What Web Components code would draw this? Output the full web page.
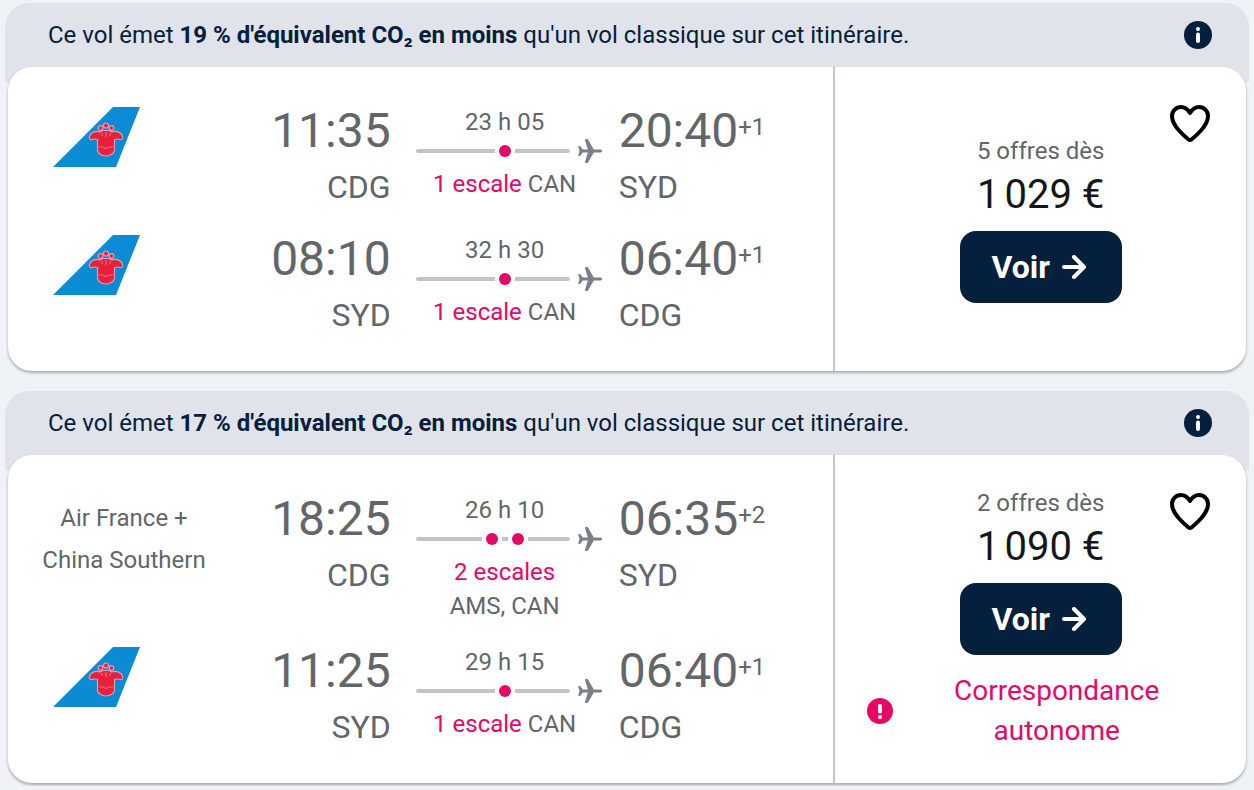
<!DOCTYPE html>
<html lang="fr">
<head>
<meta charset="utf-8">
<meta name="viewport" content="width=device-width, initial-scale=1">
<title>Vols Paris – Sydney</title>
<style>
  body {
    margin: 0;
    padding: 3px 5px;
    background: #eff3f8;
    color: #626669;
    font-family: Roboto, "Liberation Sans", sans-serif;
    font-size: 24px;
    --navy: #05203c;
    --pink: #e70866;
    --line: #c2c5c8;
    --banner: #e0e3e9;
  }
  main { display: grid; gap: 20px; }
</style>
</head>
<body>
<main>
  <flight-card>
    <span slot="eco">Ce vol émet <strong>19 % d'équivalent CO₂ en moins</strong> qu'un vol classique sur cet itinéraire.</span>
    <flight-leg dep="11:35" from="CDG" arr="20:40" to="SYD" days="+1" duration="23 h 05" stops="CAN"><southern-logo></southern-logo></flight-leg>
    <flight-leg dep="08:10" from="SYD" arr="06:40" to="CDG" days="+1" duration="32 h 30" stops="CAN"><southern-logo></southern-logo></flight-leg>
    <flight-offer slot="offer" offers="5 offres dès" price="1&#8239;029 €"></flight-offer>
  </flight-card>
  <flight-card>
    <span slot="eco">Ce vol émet <strong>17 % d'équivalent CO₂ en moins</strong> qu'un vol classique sur cet itinéraire.</span>
    <flight-leg dep="18:25" from="CDG" arr="06:35" to="SYD" days="+2" duration="26 h 10" stops="AMS, CAN">Air France + China Southern</flight-leg>
    <flight-leg dep="11:25" from="SYD" arr="06:40" to="CDG" days="+1" duration="29 h 15" stops="CAN"><southern-logo></southern-logo></flight-leg>
    <flight-offer slot="offer" offers="2 offres dès" price="1&#8239;090 €"><self-transfer>Correspondance autonome</self-transfer></flight-offer>
  </flight-card>
</main>

<script>
const define = (name, render) => customElements.define(name, class extends HTMLElement {
  connectedCallback() {
    if (this.shadowRoot) return;
    const template = document.createElement('template');
    template.innerHTML = render(this);
    this.attachShadow({ mode: 'open' }).append(template.content.cloneNode(true));
  }
});

define('southern-logo', () => `
  <style>
    :host { display: block; padding: 8px 0 0 13px; }
    svg { display: block; }
  </style>
  <svg width="88" height="60" viewBox="0 0 88 60" role="img" aria-label="China Southern">
    <path fill="#0b8bd3" d="M60 0h27L63 60H0z"/>
    <g stroke="#e39bb4" stroke-width="1.2" fill="#e8203a">
      <circle cx="47.500" cy="21" r="2.300"/><circle cx="53" cy="18.500" r="2.500"/><circle cx="58.500" cy="21" r="2.300"/>
      <path d="M47 25c-4-1.500-9 0-10.500 4-.8 2.200 1 4 2.500 3.500 2-.7 3-1 5.500 0V43c0 3.500 4.500 6 8.500 6s8.500-2.500 8.500-6V32.500c2.500-1 3.500-.7 5.500 0 1.500.500 3.300-1.300 2.500-3.500C68 25 63 23.500 59 25l-3-1.500h-6z"/>
    </g>
    <path stroke="#f2707f" fill="none" d="M46 40h4l3 1.500 3-1.500h4M49 26v3M53 25v5M57 26v3"/>
  </svg>`);

define('flight-leg', el => {
  const a = n => el.getAttribute(n);
  const count = a('stops').split(',').length;
  const dots = Array(count).fill('<i class="dot"></i>').join('<i class="dash"></i>');
  return `
  <style>
    :host { display: grid; grid-template-columns: 168px 1fr 228px 1fr; }
    .carrier { text-align: center; line-height: 42px; }
    .text { padding: 10px 0; }
    .dep { text-align: right; }
    .time { font-size: 48px; line-height: 64px; white-space: nowrap; }
    .place { font-size: 32px; line-height: 48px; }
    sup { font-size: 24px; line-height: 0; vertical-align: 12px; }
    .mid { padding: 6px 25px 0; text-align: center; line-height: 34px; }
    .track { display: grid; grid-template-columns: 1fr auto 1fr; align-items: center; height: 24px; margin-bottom: 4px; }
    .rail { height: 4px; background: var(--line); border-radius: 2px 0 0 2px; }
    .dots { display: flex; align-items: center; gap: 4px; padding: 0 4px; }
    .dot { width: 12px; height: 12px; border-radius: 50%; background: var(--pink); }
    .dash { width: 6px; height: 4px; background: var(--line); }
    .end { display: flex; align-items: center; gap: 8px; margin-right: -8px; }
    .end .rail { flex: 1; border-radius: 0 2px 2px 0; }
    svg { display: block; flex: none; }
    .via { display: flex; flex-wrap: wrap; justify-content: center; column-gap: 6px; white-space: nowrap; }
    .stops { color: var(--pink); }
  </style>
  <div class="carrier ${el.children.length ? '' : 'text'}"><slot></slot></div>
  <div class="dep"><div class="time">${a('dep')}</div><div class="place">${a('from')}</div></div>
  <div class="mid">
    <div>${a('duration')}</div>
    <div class="track">
      <div class="rail"></div><div class="dots">${dots}</div>
      <div class="end"><div class="rail"></div>
        <svg width="24" height="24" viewBox="0 0 24 24" fill="#7b7f88" aria-hidden="true"><path d="M.8 7h1.400L4.800 10.600h5L7 1Q6.800 0 7.800 0h1.400q.6 0 1 .7l5.600 9.900h6.800Q24 10.600 24 12t-1.400 1.400h-6.800l-5.600 9.900q-.4.700-1 .7H7.800Q6.800 24 7 23l2.800-9.600h-5L2.200 17H.8Q0 17 .3 16.200L1.500 12 .3 7.800Q0 7 .8 7z"/></svg>
      </div>
    </div>
    <div class="via"><span class="stops">${count} escale${count > 1 ? 's' : ''}</span><span>${a('stops')}</span></div>
  </div>
  <div class="arr"><div class="time">${a('arr')}<sup>${a('days')}</sup></div><div class="place">${a('to')}</div></div>`;
});

define('self-transfer', () => `
  <style>
    :host { display: flex; align-items: center; gap: 6px; margin-top: 16px; color: var(--pink); font-size: 28px; line-height: 40px; }
    svg { flex: none; }
    span { flex: 1; text-align: center; }
  </style>
  <svg width="26" height="26" viewBox="0 0 26 26" aria-hidden="true"><circle cx="13" cy="13" r="13" fill="#e70866"/><path d="M13 8v5.500" stroke="#fff" stroke-width="4" stroke-linecap="round"/><circle cx="13" cy="19" r="2" fill="#fff"/></svg>
  <span><slot></slot></span>`);

define('flight-offer', el => `
  <style>
    :host { display: flex; flex-direction: column; justify-content: center; position: relative; padding: 32px; border-left: 2px solid var(--line); }
    .offers { text-align: center; line-height: 32px; }
    .price { text-align: center; font-size: 40px; line-height: 56px; color: #161616; }
    button { font: inherit; border: 0; cursor: pointer; }
    .go { align-self: center; display: flex; align-items: center; justify-content: center; gap: 12px; width: 162px; height: 72px; margin-top: 8px; padding: 0 4px 0 0; border-radius: 16px; background: var(--navy); color: #fff; font-size: 32px; font-weight: 700; }
    .save { position: absolute; top: 36px; right: 35px; padding: 0; background: none; }
    svg { display: block; }
  </style>
  <button class="save" aria-label="Enregistrer"><svg width="42" height="40" viewBox="0 0 42 40" fill="none" stroke="#000" stroke-width="4" stroke-linejoin="round"><path d="M21 10C18.500 6 15.500 4 12 4 7 4 3 8 3 13c0 6 3 10 7 14.500 3 3.300 6.500 6.500 9.500 9q1.500 1.100 3 0c3-2.500 6.500-5.700 9.500-9C36 23 39 19 39 13c0-5-4-9-9-9-3.500 0-6.500 2-9 6z"/></svg></button>
  <div class="offers">${el.getAttribute('offers')}</div>
  <div class="price">${el.getAttribute('price')}</div>
  <button class="go">Voir<svg width="24" height="24" viewBox="0 0 24 24" fill="none" stroke="#fff" stroke-width="4" stroke-linecap="round" stroke-linejoin="round" aria-hidden="true"><path d="M2 12h20M12 2l10 10-10 10"/></svg></button>
  <slot></slot>`);

define('flight-card', () => `
  <style>
    :host { display: block; }
    .banner { display: flex; align-items: center; justify-content: space-between; gap: 24px; min-height: 64px; padding: 0 37px 16px 43px; margin-bottom: -16px; border-radius: 24px 24px 4px 4px; background: var(--banner); color: var(--navy); }
    .banner button { padding: 0; border: 0; background: none; cursor: pointer; }
    svg { display: block; }
    .card { position: relative; display: grid; grid-template-columns: 2fr 1fr; margin: 0 3px; border-radius: 24px; background: #fff; box-shadow: 0 2px 3px rgba(37, 32, 31, .35); }
    .legs { display: grid; gap: 16px; align-content: start; padding: 32px; }
  </style>
  <div class="banner"><slot name="eco"></slot>
    <button aria-label="Informations"><svg width="28" height="28" viewBox="0 0 28 28"><circle cx="14" cy="14" r="14" fill="#05203c"/><circle cx="14" cy="8" r="2" fill="#fff"/><path d="M14 13.500v6.500" stroke="#fff" stroke-width="4" stroke-linecap="round"/></svg></button>
  </div>
  <div class="card"><div class="legs"><slot></slot></div><slot name="offer"></slot></div>`);
</script>
</body>
</html>
